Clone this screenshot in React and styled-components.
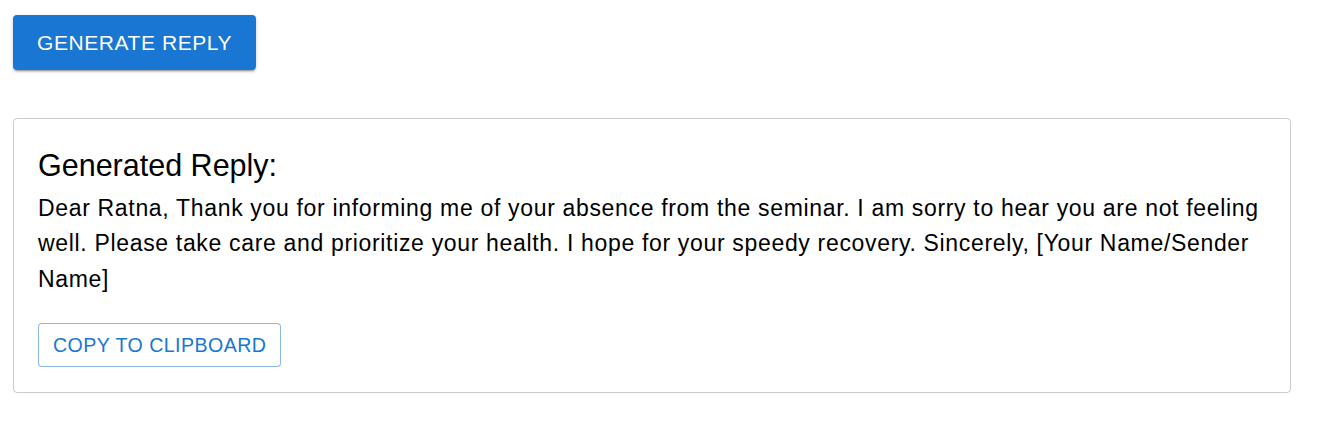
import React from "react";
import styled, { createGlobalStyle } from "styled-components";

const Global = createGlobalStyle`
  html, body { margin: 0; padding: 0; background: #fff; }
  body { font-family: "Liberation Sans", Arial, sans-serif; color: rgba(0,0,0,0.87); }
`;

const Page = styled.div`
  padding: 15px 27px 0 13px;
  display: flex;
  flex-direction: column;
  align-items: flex-start;
  gap: 48px;
`;

const PrimaryButton = styled.button`
  font-family: "Liberation Sans", Arial, sans-serif;
  font-size: 21px;
  font-weight: 400;
  letter-spacing: 0.57px;
  text-transform: uppercase;
  color: #fff;
  background: #1976d2;
  border: none;
  border-radius: 4px;
  height: 55px;
  padding: 0 24px;
  box-shadow: 0px 3px 1px -2px rgba(0,0,0,0.2), 0px 2px 2px 0px rgba(0,0,0,0.14), 0px 1px 5px 0px rgba(0,0,0,0.12);
  cursor: pointer;
`;

const Card = styled.div`
  align-self: stretch;
  box-sizing: border-box;
  border: 1px solid rgba(0,0,0,0.2);
  border-radius: 4px;
  padding: 28px 24px 25px 24px;
  display: flex;
  flex-direction: column;
  align-items: flex-start;
`;

const Title = styled.h2`
  margin: 0;
  font-size: 30.5px;
  font-weight: 400;
  line-height: 1.2;
  color: #000;
`;

const Body = styled.p`
  margin: 7px 0 0;
  font-size: 23px;
  letter-spacing: 0.67px;
  line-height: 35.5px;
  color: #000;
`;

const OutlinedButton = styled.button`
  margin-top: 26px;
  font-family: "Liberation Sans", Arial, sans-serif;
  font-size: 19.6px;
  letter-spacing: 0.45px;
  text-transform: uppercase;
  color: #1976d2;
  background: #fff;
  border: 1px solid rgba(25,118,210,0.5);
  border-radius: 4px;
  height: 44px;
  padding: 0 14px;
  cursor: pointer;
`;

export default function App() {
  return (
    <>
      <Global />
      <Page>
        <PrimaryButton>Generate Reply</PrimaryButton>
        <Card>
          <Title>Generated Reply:</Title>
          <Body>
            Dear Ratna, Thank you for informing me of your absence from the seminar. I am sorry to hear you are not feeling well. Please take care and prioritize your health. I hope for your speedy recovery. Sincerely, [Your Name/Sender Name]
          </Body>
          <OutlinedButton>Copy to Clipboard</OutlinedButton>
        </Card>
      </Page>
    </>
  );
}
